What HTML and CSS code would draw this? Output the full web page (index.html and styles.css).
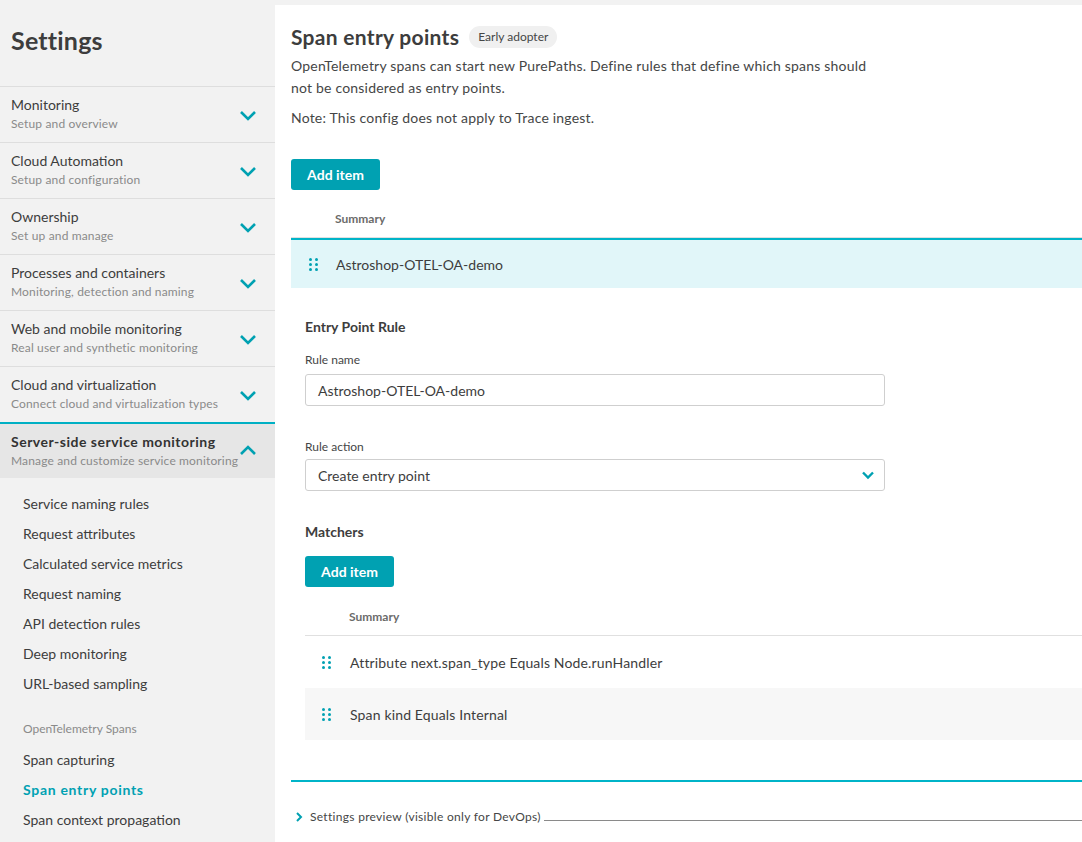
FILE: index.html
```html
<!DOCTYPE html>
<html>
<head>
<meta charset="utf-8">
<link rel="stylesheet" href="styles.css">
</head>
<body>
<div class="app">
  <aside class="sidebar">
    <h1 class="side-title">Settings</h1>
    <nav class="nav">
      <div class="nav-item">
        <div class="nav-text"><div class="nav-name">Monitoring</div><div class="nav-sub">Setup and overview</div></div>
        <svg class="chev" width="18" height="12" viewBox="0 0 18 12"><path d="M2 3 L9 10 L16 3" fill="none" stroke="#00a1b2" stroke-width="2.6"/></svg>
      </div>
      <div class="nav-item">
        <div class="nav-text"><div class="nav-name">Cloud Automation</div><div class="nav-sub">Setup and configuration</div></div>
        <svg class="chev" width="18" height="12" viewBox="0 0 18 12"><path d="M2 3 L9 10 L16 3" fill="none" stroke="#00a1b2" stroke-width="2.6"/></svg>
      </div>
      <div class="nav-item">
        <div class="nav-text"><div class="nav-name">Ownership</div><div class="nav-sub">Set up and manage</div></div>
        <svg class="chev" width="18" height="12" viewBox="0 0 18 12"><path d="M2 3 L9 10 L16 3" fill="none" stroke="#00a1b2" stroke-width="2.6"/></svg>
      </div>
      <div class="nav-item">
        <div class="nav-text"><div class="nav-name">Processes and containers</div><div class="nav-sub">Monitoring, detection and naming</div></div>
        <svg class="chev" width="18" height="12" viewBox="0 0 18 12"><path d="M2 3 L9 10 L16 3" fill="none" stroke="#00a1b2" stroke-width="2.6"/></svg>
      </div>
      <div class="nav-item">
        <div class="nav-text"><div class="nav-name">Web and mobile monitoring</div><div class="nav-sub">Real user and synthetic monitoring</div></div>
        <svg class="chev" width="18" height="12" viewBox="0 0 18 12"><path d="M2 3 L9 10 L16 3" fill="none" stroke="#00a1b2" stroke-width="2.6"/></svg>
      </div>
      <div class="nav-item">
        <div class="nav-text"><div class="nav-name">Cloud and virtualization</div><div class="nav-sub">Connect cloud and virtualization types</div></div>
        <svg class="chev" width="18" height="12" viewBox="0 0 18 12"><path d="M2 3 L9 10 L16 3" fill="none" stroke="#00a1b2" stroke-width="2.6"/></svg>
      </div>
      <div class="nav-item active">
        <div class="nav-text"><div class="nav-name">Server-side service monitoring</div><div class="nav-sub">Manage and customize service monitoring</div></div>
        <svg class="chev" width="18" height="12" viewBox="0 0 18 12"><path d="M2 9 L9 2 L16 9" fill="none" stroke="#00a1b2" stroke-width="2.6"/></svg>
      </div>
    </nav>
    <ul class="sublinks">
      <li>Service naming rules</li>
      <li>Request attributes</li>
      <li>Calculated service metrics</li>
      <li>Request naming</li>
      <li>API detection rules</li>
      <li>Deep monitoring</li>
      <li>URL-based sampling</li>
    </ul>
    <div class="group-label">OpenTelemetry Spans</div>
    <ul class="sublinks group">
      <li>Span capturing</li>
      <li class="current">Span entry points</li>
      <li>Span context propagation</li>
    </ul>
  </aside>

  <main class="main">
    <div class="content">
      <div class="title-row">
        <h2 class="page-title">Span entry points</h2>
        <span class="badge">Early adopter</span>
      </div>
      <p class="desc first">OpenTelemetry spans can start new PurePaths. Define rules that define which spans should<br>not be considered as entry points.</p>
      <p class="desc note">Note: This config does not apply to Trace ingest.</p>
      <button class="btn btn-top">Add item</button>
      <div class="table-head outer">Summary</div>
      <div class="row selected">
        <span class="handle"><i></i><i></i><i></i><i></i><i></i><i></i></span>
        <span class="row-text">Astroshop-OTEL-OA-demo</span>
      </div>
      <div class="detail">
        <h3 class="section">Entry Point Rule</h3>
        <label class="label">Rule name</label>
        <div class="field">Astroshop-OTEL-OA-demo</div>
        <label class="label label-2">Rule action</label>
        <div class="field select">
          <span>Create entry point</span>
          <svg width="14" height="10" viewBox="0 0 14 10"><path d="M2 2.5 L7 7.5 L12 2.5" fill="none" stroke="#00a1b2" stroke-width="2.4"/></svg>
        </div>
        <h3 class="section matchers">Matchers</h3>
        <button class="btn">Add item</button>
        <div class="table-head inner">Summary</div>
        <div class="matcher-rows">
          <div class="row m-row">
            <span class="handle"><i></i><i></i><i></i><i></i><i></i><i></i></span>
            <span class="row-text">Attribute next.span_type Equals Node.runHandler</span>
          </div>
          <div class="row m-row alt">
            <span class="handle"><i></i><i></i><i></i><i></i><i></i><i></i></span>
            <span class="row-text">Span kind Equals Internal</span>
          </div>
        </div>
      </div>
      <div class="end-line"></div>
      <div class="preview">
        <svg width="8" height="12" viewBox="0 0 8 12"><path d="M2 2 L6 6 L2 10" fill="none" stroke="#00a1b2" stroke-width="2"/></svg>
        <span class="preview-text">Settings preview (visible only for DevOps)</span>
        <span class="preview-line"></span>
      </div>
    </div>
  </main>
</div>
</body>
</html>
```

FILE: styles.css
```css
* { box-sizing: border-box; }
html, body { margin: 0; padding: 0; }
body {
  font-family: Lato, "Open Sans", Arial, sans-serif;
  color: #454646;
  background: #f2f2f2;
  width: 1082px;
  height: 842px;
  overflow: hidden;
}
.app { display: flex; height: 842px; }

.sidebar {
  width: 275px;
  flex: none;
  background: #f2f2f2;
}
.side-title {
  margin: 0;
  height: 86px;
  padding: 24px 0 0 11px;
  font-size: 25px;
  line-height: 32px;
  font-weight: 700;
  letter-spacing: 0.2px;
  color: #3d3d3d;
}
.nav { display: flex; flex-direction: column; }
.nav-item {
  height: 56px;
  border-top: 1px solid #dedede;
  display: flex;
  align-items: center;
  justify-content: space-between;
  padding: 0 18px 0 11px;
}
.nav-text { display: flex; flex-direction: column; margin-top: -1px; }
.nav-name { font-size: 14px; line-height: 20px; color: #3d3d3d; }
.nav-sub { font-size: 12px; line-height: 18px; color: #8a8a8a; letter-spacing: 0.15px; }
.chev { margin-top: 0; }
.nav-item.active {
  border-top: 2px solid #00b0c4;
  background: #e6e6e6;
}
.nav-item.active .nav-name { font-weight: 700; color: #333; letter-spacing: 0.5px; }

.sublinks {
  list-style: none;
  margin: 0;
  padding: 11px 0 0 23px;
}
.sublinks li {
  font-size: 14px;
  line-height: 30px;
  color: #3d3d3d;
}
.sublinks li.current { color: #00a1b2; font-weight: 700; letter-spacing: 0.7px; }
.group-label {
  margin: 20px 0 0 23px;
  font-size: 12px;
  line-height: 20px;
  color: #8a8a8a;
}
.sublinks.group { padding-top: 6px; }

.main {
  flex: 1;
  background: #fff;
  border-top: 5px solid #f2f2f2;
  min-width: 0;
}
.content { padding-left: 16px; }
.title-row {
  display: flex;
  align-items: center;
  gap: 10px;
  height: 32px;
  margin-top: 16px;
}
.page-title {
  margin: 0;
  font-size: 21px;
  font-weight: 700;
  letter-spacing: 0.3px;
  color: #3d3d3d;
  line-height: 28px;
}
.badge {
  display: inline-block;
  background: #f0f0f0;
  border-radius: 11px;
  height: 22px;
  line-height: 22px;
  padding: 0 9px;
  font-size: 12px;
  color: #454646;
}
.desc {
  margin: 0;
  font-size: 14px;
  line-height: 22px;
  letter-spacing: 0.2px;
  color: #454646;
}
.desc.first { margin-top: 2px; }
.note { margin-top: 8px; }
.btn {
  display: block;
  border: none;
  background: #00a1b2;
  color: #fff;
  font-family: inherit;
  font-size: 14px;
  font-weight: 700;
  height: 31px;
  width: 89px;
  border-radius: 3px;
  padding: 0;
  cursor: pointer;
}
.btn-top { margin-top: 30px; }
.table-head {
  font-size: 12px;
  color: #6b6b6b;
  font-weight: 700;
}
.table-head.outer {
  padding-left: 44px;
  border-bottom: 1px solid #e0e0e0;
  height: 48px;
  line-height: 57px;
}
.row {
  display: flex;
  align-items: center;
  font-size: 14px;
  color: #3d3d3d;
}
.row.selected {
  border-top: 2px solid #00b4c8;
  height: 50px;
  background: #e1f6f9;
  padding-left: 18px;
  gap: 18px;
}
.handle {
  display: grid;
  grid-template-columns: 3px 3px;
  grid-auto-rows: 3px;
  column-gap: 3px;
  row-gap: 2px;
  width: 9px;
}
.handle i {
  display: block;
  width: 3px;
  height: 3px;
  border-radius: 50%;
  background: #00a1b2;
}
.detail { padding-left: 14px; padding-top: 28px; }
.section {
  margin: 0;
  font-size: 14px;
  font-weight: 700;
  line-height: 22px;
  color: #3d3d3d;
}
.label {
  display: block;
  font-size: 12px;
  line-height: 18px;
  margin-top: 13px;
  color: #454646;
}
.label-2 { margin-top: 32px; }
.field {
  margin-top: 5px;
  width: 580px;
  height: 32px;
  border: 1px solid #cfcfcf;
  border-radius: 3px;
  padding: 0 12px;
  display: flex;
  align-items: center;
  font-size: 14px;
  color: #3d3d3d;
}
.select { justify-content: space-between; padding-right: 9px; margin-top: 3px; }
.matchers { margin-top: 30px; }
.detail .btn { margin-top: 13px; }
.table-head.inner {
  padding-left: 44px;
  height: 49px;
  line-height: 60px;
  border-bottom: 1px solid #e0e0e0;
}
.m-row {
  height: 52px;
  padding-left: 17px;
  gap: 19px;
  letter-spacing: 0.15px;
}
.m-row.alt { background: #f7f7f7; }
.end-line {
  margin-top: 40px;
  height: 2px;
  background: #00b4c8;
}
.preview {
  display: flex;
  align-items: center;
  margin-top: 27px;
  padding-left: 4px;
  gap: 7px;
  font-size: 12px;
  color: #454646;
}
.preview-text { letter-spacing: 0.3px; }
.preview-line {
  flex: 1;
  height: 1px;
  background: #8a8a8a;
  margin-top: 8px;
  margin-left: -4px;
}
```
